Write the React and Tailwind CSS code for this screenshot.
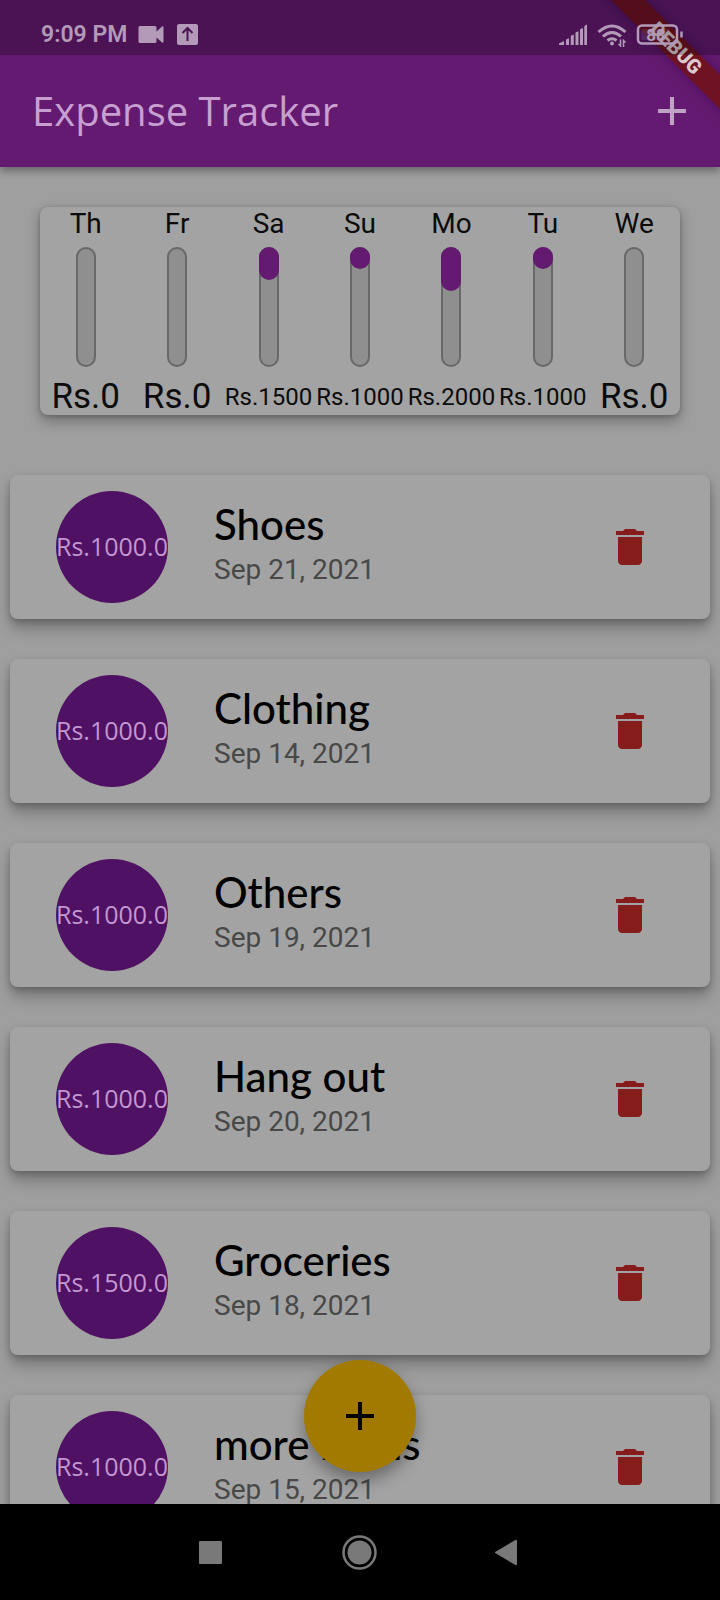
import React from "react";

const days = [
  { day: "Th", amount: 0 },
  { day: "Fr", amount: 0 },
  { day: "Sa", amount: 1500 },
  { day: "Su", amount: 1000 },
  { day: "Mo", amount: 2000 },
  { day: "Tu", amount: 1000 },
  { day: "We", amount: 0 },
];
const total = days.reduce((sum, d) => sum + d.amount, 0);

const expenses = [
  { title: "Shoes", amount: "Rs.1000.0", date: "Sep 21, 2021" },
  { title: "Clothing", amount: "Rs.1000.0", date: "Sep 14, 2021" },
  { title: "Others", amount: "Rs.1000.0", date: "Sep 19, 2021" },
  { title: "Hang out", amount: "Rs.1000.0", date: "Sep 20, 2021" },
  { title: "Groceries", amount: "Rs.1500.0", date: "Sep 18, 2021" },
  { title: "more items", amount: "Rs.1000.0", date: "Sep 15, 2021" },
];

function PlusIcon() {
  return (
    <svg className="size-12" viewBox="0 0 24 24" fill="currentColor" aria-hidden="true">
      <path d="M19 13h-6v6h-2v-6H5v-2h6V5h2v6h6v2z" />
    </svg>
  );
}

function StatusBar() {
  return (
    <div className="relative z-20 flex h-[55px] items-end justify-between bg-black/25 pr-9 pb-2 pl-[41px] font-[Roboto,sans-serif] text-[#b39ab8]">
      <div className="flex items-center">
        <span className="text-[23px] leading-6 font-semibold">9:09 PM</span>
        <svg className="ml-2 h-6 w-8" viewBox="0 0 32 24" fill="currentColor" aria-hidden="true">
          <path d="M5 3h15a1.500 1.500 0 0 1 1.500 1.500v4l5.500-5q1.500-.7 1.500.8v14.400q0 1.500-1.500.8l-5.500-5v4a1.500 1.500 0 0 1-1.500 1.500h-15a1.500 1.500 0 0 1-1.500-1.500v-14a1.500 1.500 0 0 1 1.500-1.500z" />
        </svg>
        <svg className="ml-2 size-6" viewBox="0 0 24 24" aria-hidden="true">
          <rect x="2" y="1" width="21" height="21" rx="2" fill="currentColor" />
          <path d="M12.500 18V6M7.500 10l5-5 5 5" fill="none" stroke="#4b1453" strokeWidth="2" />
        </svg>
      </div>
      <div className="flex items-center gap-2">
        <svg className="h-6 w-8" viewBox="0 0 32 24" fill="currentColor" aria-hidden="true">
          <path d="M3 20.500l5-2.500V22H3zM10 16.500l3-1.200V22h-3zM14.800 12.800l3-1.200V22h-3zM19.500 9.500l3-1.200V22h-3zM24 6.200l3-1.200V22h-3zM28.300 3l2.700-1.500V22h-2.700z" />
        </svg>
        <svg className="h-6 w-8" viewBox="0 0 32 24" fill="none" stroke="currentColor" strokeWidth="3" aria-hidden="true">
          <path d="M2.500 9Q16 -3 29.500 9M7 13.500q9-8 18 0M11.500 17.500q4.500-3.500 9 0" />
          <circle cx="16" cy="20.500" r="2" fill="currentColor" stroke="none" />
          <path d="M24.500 16.500v6.500l-2-2M27.500 24v-6.500l2 2" strokeWidth="1.500" />
        </svg>
        <svg className="h-6 w-12" viewBox="0 0 48 24" fill="none" stroke="currentColor" aria-hidden="true">
          <rect x="2" y="2.500" width="39" height="18" rx="4" strokeWidth="2.500" />
          <rect x="5.500" y="6" width="28" height="11" fill="currentColor" fillOpacity="0.15" stroke="none" />
          <path d="M45.500 8.500v6" strokeWidth="2.500" />
          <text x="20" y="17.500" textAnchor="middle" fill="currentColor" stroke="none" fontSize="17" fontWeight="700">88</text>
        </svg>
      </div>
    </div>
  );
}

function DayBar({ day, amount }) {
  return (
    <div className="flex flex-1 flex-col items-center text-[#0b0b0b]">
      <div className="flex h-[34px] shrink-0 items-center text-[28px]">{day}</div>
      <div className="mt-1.5 h-[120px] w-5 shrink-0 rounded-[10px] border-2 border-[#686868] bg-[#8f8f8f]">
        <div
          className="-mx-0.5 -mt-0.5 rounded-[10px] bg-[#641a70]"
          style={{ height: `${Math.round((amount / total) * 120)}px` }}
        />
      </div>
      <div className="mt-3 flex h-9 shrink-0 items-center leading-9 whitespace-nowrap">
        <span className={amount ? "text-2xl leading-9" : "text-[35px] leading-9"}>Rs.{amount}</span>
      </div>
    </div>
  );
}

function ExpenseCard({ title, amount, date }) {
  return (
    <li className="mx-2.5 flex items-center rounded-lg bg-[#a3a3a3] py-4 pr-14 pl-[46px] shadow-[0_10px_16px_rgba(0,0,0,0.25),0_3px_6px_rgba(0,0,0,0.2)]">
      <div className="flex size-28 shrink-0 items-center justify-center rounded-full bg-[#4f1164] font-['Open_Sans',sans-serif] text-[25px] text-[#c397cf]">
        {amount}
      </div>
      <div className="ml-[46px] min-w-0 flex-1 pb-1.5">
        <h2 className="mb-1 font-['Lato',sans-serif] text-[42px] leading-[48px] font-medium text-black">
          {title}
        </h2>
        <p className="text-[28px] leading-9 text-[#484848]">{date}</p>
      </div>
      <button type="button" aria-label={`Delete ${title}`} className="text-[#871c1c]">
        <svg className="size-12" viewBox="0 0 24 24" fill="currentColor" aria-hidden="true">
          <path d="M6 19c0 1.100.9 2 2 2h8c1.100 0 2-.9 2-2V7H6v12zM19 4h-3.500l-1-1h-5l-1 1H5v2h14V4z" />
        </svg>
      </button>
    </li>
  );
}

export default function App() {
  return (
    <div className="relative flex h-screen flex-col overflow-hidden bg-[#9f9f9f] font-[Roboto,sans-serif]">
      <header className="relative z-10 bg-[#641a70] shadow-[0_4px_8px_rgba(0,0,0,0.35)]">
        <StatusBar />
        <div className="flex h-28 items-center justify-between pr-6 pl-8">
          <h1 className="font-['Open_Sans',sans-serif] text-[40px] text-[#c79fd0]">Expense Tracker</h1>
          <button type="button" aria-label="Add expense" className="text-[#c0a4c5]">
            <PlusIcon />
          </button>
        </div>
        <div className="pointer-events-none absolute top-0 right-0 z-10 size-40 overflow-hidden">
          <div className="absolute top-9 -right-14 flex h-6 w-50 rotate-45 items-center justify-center bg-[#6f1224] text-xl font-black text-[#dcc8cd] shadow-[0_0_12px_rgba(50,0,70,0.5)]">
            DEBUG
          </div>
        </div>
      </header>

      <main className="relative min-h-0 flex-1">
        <div className="h-full overflow-y-auto [scrollbar-width:none]">
          <section
            aria-label="Spending this week"
            className="m-10 flex h-52 rounded-lg bg-[#a3a3a3] shadow-[0_6px_14px_rgba(0,0,0,0.3),0_1px_4px_rgba(0,0,0,0.2)]"
          >
            {days.map((d) => (
              <DayBar key={d.day} {...d} />
            ))}
          </section>
          <ul className="flex flex-col gap-10 py-5">
            {expenses.map((e) => (
              <ExpenseCard key={e.title} {...e} />
            ))}
          </ul>
        </div>
        <button
          type="button"
          aria-label="Add new expense"
          className="absolute bottom-8 left-1/2 flex size-28 -translate-x-1/2 items-center justify-center rounded-full bg-[#a37a00] text-black shadow-[0_8px_16px_rgba(0,0,0,0.35)]"
        >
          <PlusIcon />
        </button>
      </main>

      <nav className="flex h-24 items-center justify-center gap-28 bg-black text-[#797979]">
        <button type="button" aria-label="Recent apps">
          <svg className="size-9" viewBox="0 0 36 36" fill="currentColor"><rect x="5" y="7" width="23" height="23" rx="1" /></svg>
        </button>
        <button type="button" aria-label="Home">
          <svg className="size-9" viewBox="0 0 36 36" fill="currentColor">
            <circle cx="17.500" cy="18.500" r="12" />
            <circle cx="17.500" cy="18.500" r="16" fill="none" stroke="currentColor" strokeWidth="2.500" />
          </svg>
        </button>
        <button type="button" aria-label="Back">
          <svg className="size-9" viewBox="0 0 36 36" fill="currentColor"><path d="M5.500 17.700L25.500 5.900q1.500-.6 1.500 1v23.200q0 1.600-1.500 1L5.500 19.300q-1.200-.8 0-1.600z" /></svg>
        </button>
      </nav>
    </div>
  );
}
